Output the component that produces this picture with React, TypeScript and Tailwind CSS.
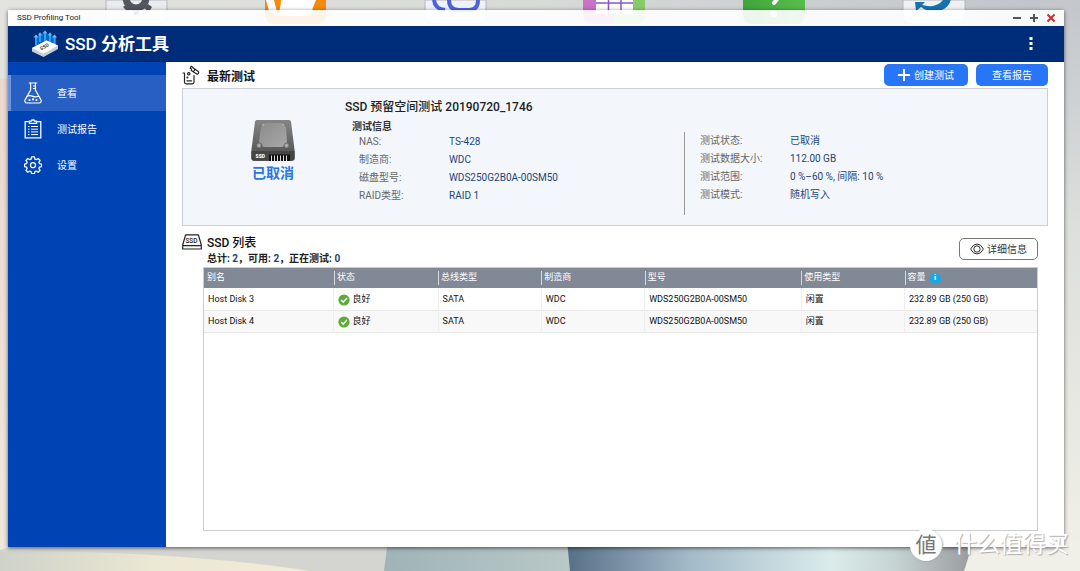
import { clsx } from "clsx";

const navItems = [
  { name: "查看", icon: FlaskIcon, active: true },
  { name: "测试报告", icon: ReportIcon, active: false },
  { name: "设置", icon: GearIcon, active: false },
];

const testInfo = [
  { label: "NAS:", value: "TS-428" },
  { label: "制造商:", value: "WDC" },
  { label: "磁盘型号:", value: "WDS250G2B0A-00SM50" },
  { label: "RAID类型:", value: "RAID 1" },
];

const testStatus = [
  { label: "测试状态:", value: "已取消" },
  { label: "测试数据大小:", value: "112.00 GB" },
  { label: "测试范围:", value: "0 %–60 %, 间隔: 10 %" },
  { label: "测试模式:", value: "随机写入" },
];

const columns = [
  { name: "别名", width: "w-[15.6%]" },
  { name: "状态", width: "w-[12.5%]" },
  { name: "总线类型", width: "w-[12.4%]" },
  { name: "制造商", width: "w-[12.4%]" },
  { name: "型号", width: "w-[18.8%]" },
  { name: "使用类型", width: "w-[12.4%]" },
  { name: "容量", width: "w-[15.9%]" },
];

const disks = [
  {
    alias: "Host Disk 3",
    status: "良好",
    bus: "SATA",
    vendor: "WDC",
    model: "WDS250G2B0A-00SM50",
    usage: "闲置",
    capacity: "232.89 GB (250 GB)",
  },
  {
    alias: "Host Disk 4",
    status: "良好",
    bus: "SATA",
    vendor: "WDC",
    model: "WDS250G2B0A-00SM50",
    usage: "闲置",
    capacity: "232.89 GB (250 GB)",
  },
];

function FlaskIcon() {
  return (
    <svg viewBox="0 0 18 22" className="h-[22px] w-[18px]" fill="none" stroke="currentColor" strokeWidth="1.2" strokeLinecap="round" strokeLinejoin="round">
      <path d="M5.200 1h7.600" />
      <path d="M6.600 1V8L1.200 17.600C0.300 19.400 1.200 21 3 21H15C16.800 21 17.700 19.400 16.800 17.600L11.400 8V1" />
      <path d="M3.400 14.200C5.400 13.200 7.200 13.600 9 14.400C10.800 15.200 12.600 15 14.600 14.200" />
      <path d="M11.400 4H9.400M11.400 6.500H9.400" strokeWidth="1" />
      <circle cx="5.500" cy="18" r=".5" fill="currentColor" />
      <circle cx="9" cy="17.400" r=".5" fill="currentColor" />
      <circle cx="12.500" cy="18" r=".5" fill="currentColor" />
    </svg>
  );
}

function ReportIcon() {
  return (
    <svg viewBox="0 0 18 20" className="h-5 w-[18px]" fill="none" stroke="currentColor" strokeWidth="1.3">
      <path d="M5 2.700H1.200V18.800H16.800V2.700H13" />
      <path d="M5.500 4.300V2.200H7.500L8 1h2l.5 1.200h2v2.100z" />
      <path d="M4 7.500h1.500M7 7.500h7M4 10.200h1.500M7 10.200h7M4 12.900h1.500M7 12.900h7M4 15.600h1.500M7 15.600h7" strokeWidth="1" />
    </svg>
  );
}

function GearIcon() {
  return (
    <svg viewBox="0 0 20 20" className="h-[18px] w-[18px]" fill="none" stroke="currentColor" strokeWidth="1.400" strokeLinejoin="round">
      <path d="M8.400 1h3.200l.5 2.500 1.500.6 2.100-1.400 2.200 2.200-1.400 2.100.6 1.500 2.500.5v2.700l-2.500.6-.6 1.500 1.400 2.100-2.200 2.200-2.100-1.400-1.500.6-.5 2.300H8.400l-.5-2.300-1.500-.6-2.100 1.400-2.200-2.200 1.400-2.100-.6-1.500L.6 11.700V9l2.300-.5.6-1.500-1.400-2.100 2.200-2.200 2.100 1.400 1.500-.6z" />
      <circle cx="10" cy="10.200" r="2.800" />
    </svg>
  );
}

function AppLogo() {
  return (
    <svg viewBox="0 0 26 27" className="h-[27px] w-[26px]">
      <path d="M3 7l9-4 12 4v9l-10 4L3 16z" fill="#0f63c6" />
      <path d="M4 15V5.500M8 12V4M13 11V2M18 12V4M22.500 15V5.500" stroke="#2c9ff0" strokeWidth="2" />
      <path d="M1.500 7.500L4 4.500 6.500 7.500zM5.800 5.200L8 2.200l2.200 3zM10.500 3.500L13 .2l2.500 3.300zM15.800 5.200L18 2.200l2.200 3zM20 7.500l2.500-3L25 7.500z" fill="#5cc0fa" />
      <path d="M0 18L14.500 10.500 26 15.500v3.500L11.500 27 0 21.500z" fill="#c9ced6" />
      <path d="M0 18L14.500 10.500 26 15.500 11.500 23.800z" fill="#fff" />
      <text x="0" y="0" transform="translate(9 20.500) rotate(-29)" fontSize="5" fontWeight="700" fill="#444">SSD</text>
    </svg>
  );
}

function BeakerIcon() {
  return (
    <svg viewBox="0 0 18 20" className="h-5 w-[18px]" fill="none" stroke="#222" strokeWidth="1.200" strokeLinejoin="round" strokeLinecap="round">
      <path d="M1 8H2.500V17C2.500 18.200 3 18.800 4.200 18.800H10.300C11.500 18.800 12 18.200 12 17V10.500" />
      <path d="M5 15.800H9.500" />
      <path d="M9.200 1.200L8.200 3.200L9.500 4L9.300 5.500L14.800 9C16 9.700 17.400 7.400 16.300 6.500L11.200 3.100L10.500 2z" />
      <path d="M12.900 4.300L11.400 6.700" />
      <circle cx="6.800" cy="8.800" r="1.200" />
      <circle cx="5.400" cy="12.400" r=".4" />
    </svg>
  );
}

function SsdDrive() {
  return (
    <svg viewBox="0 0 44 41" className="h-[41px] w-11">
      <defs>
        <linearGradient id="drive" x1="0" y1="0" x2="0" y2="1">
          <stop offset="0" stopColor="#858585" />
          <stop offset="1" stopColor="#4c4c4c" />
        </linearGradient>
        <linearGradient id="plate" x1="0" y1="0" x2="1" y2="1">
          <stop offset="0" stopColor="#8b8b8b" />
          <stop offset="1" stopColor="#a8a8a8" />
        </linearGradient>
      </defs>
      <path d="M6 0h32c1.200 0 1.800.7 2 1.800L43.600 30v8c0 1.800-1 2.800-2.600 2.800H3C1.400 40.800.4 39.800.4 38v-8L4 1.800C4.200.7 4.800 0 6 0z" fill="url(#drive)" />
      <path d="M.4 31h43.200v7c0 1.800-1 2.800-2.600 2.800H3C1.400 40.800.4 39.800.4 38z" fill="#454545" />
      <path d="M14 3h17l1 2 3 2 1 15-3 2-1 3H12l-1-3-3-2L10 7l3-2z" fill="url(#plate)" />
      <g fill="#aaa" stroke="#888" strokeWidth=".6">
        <circle cx="12.500" cy="5" r="1.600" />
        <circle cx="32" cy="5" r="1.600" />
        <circle cx="8" cy="25.500" r="2" />
        <circle cx="35.500" cy="25.500" r="2" />
      </g>
      <path d="M18 34.500h21V41H18z" fill="#111" />
      <path d="M20.500 35.500V41M23.500 35.500V41M26.500 35.500V41M29.500 35.500V41M32.500 35.500V41M35.500 35.500V41" stroke="#ddd" strokeWidth="1" />
      <text x="4.500" y="37.500" fontSize="5" fontWeight="900" fill="#fff">SSD</text>
    </svg>
  );
}

function SsdListIcon() {
  return (
    <svg viewBox="0 0 20 16" className="h-4 w-5" fill="none" stroke="#222" strokeWidth="1.200" strokeLinejoin="round">
      <path d="M3.600.8h12.800L19.300 11v4H.7v-4zM.7 11.600h18.600" />
      <text x="3.400" y="8.700" fontSize="6.500" fontWeight="500" fill="#222" stroke="none">SSD</text>
    </svg>
  );
}

// Desktop behind the window: wallpaper shapes and the bottom edge of the shortcut row
function Desktop() {
  return (
    <svg viewBox="0 0 1080 571" preserveAspectRatio="none" className="absolute inset-0 h-full w-full" aria-hidden="true">
      <defs>
        <linearGradient id="sky" x1="0" x2="1" y1="0" y2="0">
          <stop offset="0" stopColor="#e3e4e0" />
          <stop offset=".5" stopColor="#d8dad8" />
          <stop offset="1" stopColor="#bfc3c9" />
        </linearGradient>
        <linearGradient id="left" x1="0" x2="0" y1="0" y2="1">
          <stop offset="0" stopColor="#ecd8cd" />
          <stop offset="1" stopColor="#f0e8da" />
        </linearGradient>
        <linearGradient id="right" x1="0" x2="0" y1="0" y2="1">
          <stop offset="0" stopColor="#c3c7cc" />
          <stop offset=".4" stopColor="#dddfdc" />
          <stop offset="1" stopColor="#f1f0e8" />
        </linearGradient>
        <linearGradient id="sand" x1="0" x2="1" y1="0" y2="0">
          <stop offset="0" stopColor="#cfd2c9" />
          <stop offset=".5" stopColor="#ebe8d3" />
          <stop offset="1" stopColor="#f1ecd8" />
        </linearGradient>
        <linearGradient id="teal" x1="0" x2="1" y1="0" y2="0">
          <stop offset="0" stopColor="#9fb4b7" />
          <stop offset="1" stopColor="#bac9c8" />
        </linearGradient>
        <linearGradient id="sea" x1="0" x2="1" y1="0" y2="0">
          <stop offset="0" stopColor="#567087" />
          <stop offset=".3" stopColor="#a3bac8" />
          <stop offset=".65" stopColor="#daeceb" />
          <stop offset=".8" stopColor="#c8d5d5" />
          <stop offset="1" stopColor="#999b9e" />
        </linearGradient>
        <linearGradient id="green" x1="0" x2="1" y1="0" y2="0">
          <stop offset="0" stopColor="#3fa53c" />
          <stop offset="1" stopColor="#57bd4a" />
        </linearGradient>
      </defs>
      <path d="M0 0h1080v571H0z" fill="url(#sky)" />
      <path d="M0 79h40v480H0z" fill="url(#left)" />
      <path d="M1040 0h40v571h-40z" fill="url(#right)" />
      <path d="M0 550l30-10h360v31H0z" fill="#d4d5d0" />
      <path d="M0 551q180 0 310 20H0z" fill="url(#sand)" />
      <path d="M388 540h190v31H384z" fill="url(#teal)" />
      <path d="M567 540h406l-8 31H570z" fill="url(#sea)" />
      <path d="M974 540h106v31H964z" fill="#f1f0e8" />

      <path d="M106 0h61v14q0 10-10 10h-41q-10 0-10-10z" fill="#e9ebee" stroke="#b5b7ba" />
      <circle cx="136" cy="-2" r="10" fill="none" stroke="#53565c" strokeWidth="7" />
      <path d="M134 10h5v5h-5zM123 7l4-3 4 4-3 4zM144 8l4-4 4 3-3 5z" fill="#53565c" />
      <path d="M265 0h61v14q0 10-10 10h-41q-10 0-10-10z" fill="#f58a0b" />
      <path d="M266 0h8l4 16-9-5zM281 0h35q-4 8-5 16h-34q4-8 4-16z" fill="#fff" />
      <path d="M425 0h61v14q0 10-10 10h-41q-10 0-10-10z" fill="#eff1fb" stroke="#b5b7ba" />
      <path d="M434 0q1 9 11 10M449 0q0 10 10 10h10q9 0 9-10" fill="none" stroke="#4e63d9" strokeWidth="4" />
      <path d="M583 0h62v14q0 10-10 10h-42q-10 0-10-10z" fill="#c873c6" />
      <path d="M614 0h31v14q0 10-10 10h-21z" fill="#8acb69" />
      <path d="M596 0h37v14h-37z" fill="#fff" />
      <path d="M596 3h37M608.500 0v14M621 0v14" stroke="#8758c2" strokeWidth="1.500" />
      <path d="M743 0h62v14q0 10-10 10h-42q-10 0-10-10z" fill="url(#green)" />
      <path d="M778 -2l-4 5" fill="none" stroke="#fff" strokeWidth="4" strokeLinecap="round" />
      <circle cx="774" cy="14" r="3.500" fill="#fff" />
      <path d="M903 0h62v14q0 10-10 10h-42q-10 0-10-10z" fill="#eff1f5" stroke="#b5b7ba" />
      <path d="M915 2l10 0-3 3q11 3 18-2l4-4h7q-3 13-19 12-6 0-11-4l-5 4z" fill="#1772ad" />
    </svg>
  );
}

function InfoList({ items }: { items: { label: string; value: string }[] }) {
  return (
    <dl className="text-[10px] leading-[18px]">
      {items.map((item) => (
        <div key={item.label} className="flex">
          <dt className="w-[90px] shrink-0 text-[#666]">{item.label}</dt>
          <dd className="text-[#1d4577]">{item.value}</dd>
        </div>
      ))}
    </dl>
  );
}

function TitleBar() {
  return (
    <div className="flex h-4 items-center justify-between bg-white/90 pr-2 pl-[9px]">
      <span className="text-[8px] leading-4 text-[#222]">SSD Profiling Tool</span>
      <div className="flex items-center gap-[7px]">
        <button type="button" aria-label="最小化" className="text-[#555]">
          <svg viewBox="0 0 10 10" className="size-[10px]" stroke="currentColor" strokeWidth="2">
            <path d="M1 5h8" />
          </svg>
        </button>
        <button type="button" aria-label="最大化" className="text-[#555]">
          <svg viewBox="0 0 10 10" className="size-[10px]" stroke="currentColor" strokeWidth="2">
            <path d="M1 5h8M5 1v8" />
          </svg>
        </button>
        <button type="button" aria-label="关闭" className="text-[#cf2a2e]">
          <svg viewBox="0 0 10 10" className="size-[10px]" stroke="currentColor" strokeWidth="2">
            <path d="M1.500 1.500l7 7M8.500 1.500l-7 7" />
          </svg>
        </button>
      </div>
    </div>
  );
}

function Sidebar() {
  return (
    <nav className="w-[158px] shrink-0 bg-[#0043b5] pt-[13px]">
      {navItems.map((item) => (
        <a
          key={item.name}
          href="#"
          className={clsx(
            "flex h-9 items-center gap-[14px] border-l-[3px] pl-3 text-[10px] text-white",
            item.active ? "border-[#6d96dc] bg-[#285fc2]" : "border-transparent"
          )}
        >
          <span className="flex w-5 justify-center">
            <item.icon />
          </span>
          {item.name}
        </a>
      ))}
    </nav>
  );
}

function DiskTable() {
  return (
    <div className="ml-[21px] mr-[10px] flex-1 border border-[#ccc]">
      <table className="w-full table-fixed border-collapse text-left text-[9px] text-[#111]">
        <thead>
          <tr className="h-5 bg-[#818896] text-white">
            {columns.map((column, i) => (
              <th key={column.name} className={clsx("p-0 font-normal", column.width)}>
                <div
                  className={clsx(
                    "flex h-[14px] items-center gap-1",
                    i === 0 ? "pl-[3px]" : "border-l border-[#d5d8de] pl-[2px]"
                  )}
                >
                  {column.name}
                  {column.name === "容量" && (
                    <span className="flex size-[11px] items-center justify-center rounded-full bg-[#1ba7e4] text-[8px] font-bold">
                      i
                    </span>
                  )}
                </div>
              </th>
            ))}
          </tr>
        </thead>
        <tbody>
          {disks.map((disk) => (
            <tr
              key={disk.alias}
              className="h-[22px] border-b border-[#e8e8e8] even:bg-[#f8f8f8] [&>td]:border-l [&>td]:border-[#eee] [&>td]:pt-[2px] [&>td]:pr-0 [&>td]:pb-0 [&>td]:pl-1 [&>td:first-child]:border-l-0"
            >
              <td>{disk.alias}</td>
              <td>
                <span className="flex items-center gap-[2px]">
                  <svg viewBox="0 0 12 12" className="size-3">
                    <circle cx="6" cy="6" r="5.600" fill="#5dab37" />
                    <path d="M3.200 6l2 2.200L9 4" fill="none" stroke="#fff" strokeWidth="1.500" />
                  </svg>
                  {disk.status}
                </span>
              </td>
              <td>{disk.bus}</td>
              <td>{disk.vendor}</td>
              <td>{disk.model}</td>
              <td>{disk.usage}</td>
              <td>{disk.capacity}</td>
            </tr>
          ))}
        </tbody>
      </table>
    </div>
  );
}

export default function App() {
  return (
    <div className="relative flex min-h-screen flex-col overflow-hidden pt-[10px] pr-4 pb-6 pl-2 font-[Roboto,'Noto_Sans_CJK_SC',sans-serif]">
      <Desktop />

      <div className="relative flex flex-1 flex-col shadow-[0_1px_4px_rgba(0,0,0,0.6)]">
        <TitleBar />
        <header className="flex h-9 items-center justify-between border-b border-[#0a2260] bg-[#002d79] pr-[27px] pl-6 text-white">
          <div className="flex items-center gap-[7px]">
            <AppLogo />
            <h1 className="text-[17px] leading-6 font-medium">
              SSD <span className="font-bold">分析工具</span>
            </h1>
          </div>
          <button type="button" aria-label="更多" className="flex h-6 w-3 items-center justify-center">
            <svg viewBox="0 0 4 14" className="h-[14px] w-1" fill="currentColor">
              <path d="M.5 0h3v3h-3zM.5 5h3v3h-3zM.5 10h3v3h-3z" />
            </svg>
          </button>
        </header>

        <div className="flex flex-1">
          <Sidebar />
          <main className="flex min-w-0 flex-1 flex-col bg-white pr-4 pb-4 pl-4">
            <div className="flex h-[26px] items-center justify-between">
              <div className="flex items-center gap-[7px]">
                <BeakerIcon />
                <h2 className="pt-1 text-[12px] leading-4 font-bold text-[#111]">最新测试</h2>
              </div>
              <div className="flex gap-2 text-[10px] text-white">
                <button type="button" className="flex h-[22px] items-center gap-1 rounded-[5px] bg-[#2876f8] px-[14px]">
                  <svg viewBox="0 0 12 12" className="size-3" stroke="currentColor" strokeWidth="2">
                    <path d="M6 0v12M0 6h12" />
                  </svg>
                  创建测试
                </button>
                <button type="button" className="h-[22px] rounded-[5px] bg-[#2876f8] px-4">
                  查看报告
                </button>
              </div>
            </div>

            <section className="flex h-[138px] border border-[#ccd0d6] bg-[#f3f7fc]">
              <div className="ml-[18px] flex w-[144px] shrink-0 flex-col items-center pt-[31px]">
                <SsdDrive />
                <p className="mt-[2px] text-[14px] leading-5 font-bold text-[#2b74e6]">已取消</p>
              </div>
              <div className="grid flex-1 grid-cols-[14fr_15fr] pt-[10px]">
                <div>
                  <h3 className="text-[12px] leading-4 font-medium text-[#222]">SSD 预留空间测试 20190720_1746</h3>
                  <h4 className="mt-1 pl-[7px] text-[10px] leading-4 font-bold text-[#333]">测试信息</h4>
                  <div className="-mt-[2px] pl-[14px]">
                    <InfoList items={testInfo} />
                  </div>
                </div>
                <div className="mt-[33px] mb-[10px] border-l border-[#999] pl-[15px]">
                  <InfoList items={testStatus} />
                </div>
              </div>
            </section>

            <div className="flex h-[41px] items-start justify-between pr-[10px]">
              <div className="flex gap-[5px] pt-2">
                <SsdListIcon />
                <div>
                  <h2 className="text-[12px] leading-[18px] font-medium text-[#111]">SSD 列表</h2>
                  <p className="text-[10px] leading-[14px] font-bold text-[#222]">
                    总计: <span className="text-[#1d4577]">2</span>，可用: <span className="text-[#1d4577]">2</span>，正在测试:{" "}
                    <span className="text-[#1d4577]">0</span>
                  </p>
                </div>
              </div>
              <button type="button" className="mt-3 flex h-[22px] items-center gap-[3px] rounded-[5px] border border-[#777] px-[10px] text-[10px] text-[#333]">
                <svg viewBox="0 0 14 12" className="h-3 w-[14px]" fill="none" stroke="currentColor">
                  <path d="M.6 6Q3 1 7 1t6.400 5Q11 11 7 11T.6 6z" />
                  <circle cx="7" cy="6" r="3.200" />
                </svg>
                详细信息
              </button>
            </div>

            <DiskTable />
          </main>
        </div>
      </div>

      <div className="absolute right-[11px] bottom-[10px] flex items-center gap-3 text-[23px] leading-8 text-white [text-shadow:1px_1px_1px_#aaa]">
        <span className="flex size-8 items-center justify-center rounded-full bg-white text-[21px] text-[#777] shadow-[1px_1px_2px_#aaa] [text-shadow:none]">
          値
        </span>
        什么值得买
      </div>
    </div>
  );
}
